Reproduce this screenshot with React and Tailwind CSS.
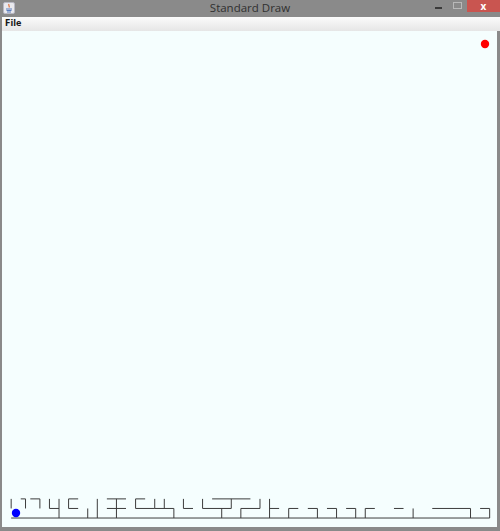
import React from 'react';

// maze grid: cell k -> pixel
const px = (k) => 1.6 + 9.57 * k;
const py = (y) => 527.6 - 9.57 * y;

// walls in maze coords: [x1, y1, x2, y2]
const walls = [
  [1, 1, 51, 1],
  [1, 2, 1, 3],
  [2, 3, 2.5, 3],
  [2.5, 3, 2.5, 2],
  [3, 3, 4, 3],
  [4, 3, 4, 2],
  [5, 3, 5, 2],
  [5, 2, 6, 2],
  [6, 3, 6, 1],
  [7, 3, 7, 2],
  [7, 3, 8, 3],
  [7, 2, 8, 2],
  [9, 2, 9, 1],
  [10, 3, 10, 1],
  [11, 3, 13, 3],
  [11, 2, 13, 2],
  [12, 3, 12, 1],
  [14, 3, 14, 2],
  [14, 3, 15, 3],
  [14, 2, 16, 2],
  [16, 3, 16, 2],
  [16, 2, 18, 2],
  [17, 3, 17, 2],
  [18, 2, 18, 1],
  [19, 3, 19, 2],
  [19, 2, 20, 2],
  [21, 3, 21, 2],
  [21, 2, 24, 2],
  [22, 3, 26, 3],
  [24, 3, 24, 2],
  [23, 2, 23, 1],
  [25, 2, 25, 1],
  [25, 2, 27, 2],
  [27, 3, 27, 2],
  [28, 3, 28, 1],
  [28, 2, 29, 2],
  [30, 2, 30, 1],
  [30, 2, 31, 2],
  [32, 2, 33, 2],
  [33, 2, 33, 1],
  [34, 2, 35, 2],
  [35, 2, 35, 1],
  [36, 2, 37, 2],
  [37, 2, 37, 1],
  [38, 2, 38, 1],
  [38, 2, 39, 2],
  [41, 2, 42, 2],
  [43, 2, 43, 1],
  [45, 2, 49, 2],
  [49, 2, 49, 1],
  [50, 2, 51, 2],
  [51, 2, 51, 1],
];

const JavaIcon = () => (
  <svg width="12" height="12" viewBox="0 0 12 12">
    <rect x="0.5" y="0.5" width="11" height="11" rx="1.5" fill="#e9e9ee" stroke="#b8b8c4" />
    <path d="M6 2 C5 3.5 7 4 6 5.5" stroke="#e0662a" strokeWidth="1.1" fill="none" />
    <path d="M3 7 h6 M3.5 8.5 h5 M4 10 h4" stroke="#4a6fb5" strokeWidth="0.9" />
  </svg>
);

export default function App() {
  return (
    <div className="w-[500px] h-[531px] bg-[#8a8a8a] flex flex-col" style={{ fontFamily: '"Open Sans", "Liberation Sans", sans-serif' }}>
      <div className="h-[17px] grid grid-cols-[1fr_auto_1fr] items-start">
        <div className="pl-[3px] pt-[2px]">
          <JavaIcon />
        </div>
        <div className="text-center text-[11.5px] leading-[17px] text-[#303030] -mt-[1px]">Standard Draw</div>
        <div className="flex items-start justify-end">
          <div className="w-[7px] h-[2px] bg-[#3a3a3a] mt-[7px] mr-[11px]" />
          <div className="w-[9px] h-[7px] border border-[#b9b9b9] mt-[2px] mr-[5px]" />
          <div className="w-[33px] h-[12px] bg-[#c95550] flex items-center justify-center text-white text-[10px] font-bold leading-none">x</div>
        </div>
      </div>
      <div className="h-[14px] ml-[2px] bg-gradient-to-b from-[#fbfbfb] to-[#e6e6e6] flex items-center pl-[3px]">
        <span className="text-[8px] font-bold text-[#1a1a1a]" style={{ fontFamily: '"DejaVu Sans", sans-serif' }}>File</span>
      </div>
      <div className="flex-1 mx-[2px] mr-[3px] mb-[4px] bg-[#f5fefe]">
        <svg width="495" height="496" viewBox="2 31 495 496" className="block">
          {walls.map(([x1, y1, x2, y2], i) => (
            <line key={i} x1={px(x1)} y1={py(y1)} x2={px(x2)} y2={py(y2)} stroke="#3c3c3c" strokeWidth="1" />
          ))}
          <circle cx="16" cy="513" r="4.2" fill="#0000ff" />
          <circle cx="485" cy="44" r="4.2" fill="#ff0000" />
        </svg>
      </div>
    </div>
  );
}
